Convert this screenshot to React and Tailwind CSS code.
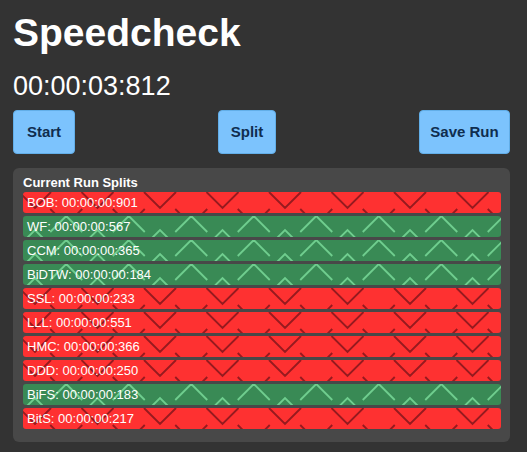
import React from "react";

const splits = [
  { name: "BOB", time: "00:00:00:901", ahead: false },
  { name: "WF", time: "00:00:00:567", ahead: true },
  { name: "CCM", time: "00:00:00:365", ahead: true },
  { name: "BiDTW", time: "00:00:00:184", ahead: true },
  { name: "SSL", time: "00:00:00:233", ahead: false },
  { name: "LLL", time: "00:00:00:551", ahead: false },
  { name: "HMC", time: "00:00:00:366", ahead: false },
  { name: "DDD", time: "00:00:00:250", ahead: false },
  { name: "BiFS", time: "00:00:00:183", ahead: true },
  { name: "BitS", time: "00:00:00:217", ahead: false },
];

const PERIOD = 62.5;
const OFFSET = 12;

// chevron background drawn behind the split text
function Chevrons({ up }) {
  const paths = [];
  for (let k = -1; k < 9; k++) {
    const a = OFFSET + k * PERIOD;
    const b = a + PERIOD / 2;
    if (up) {
      paths.push(`M${b - 16} 16 L${b} 0 L${b + 16} 16`);
      paths.push(`M${a - 16} 30 L${a} 14 L${a + 16} 30`);
    } else {
      paths.push(`M${a - 16} 0 L${a} 16 L${a + 16} 0`);
      paths.push(`M${b - 16} 17 L${b} 33 L${b + 16} 17`);
    }
  }
  return (
    <svg className="absolute inset-0 w-full h-full" aria-hidden="true">
      <path
        d={paths.join(" ")}
        fill="none"
        stroke={up ? "#6fcd8e" : "#961a1f"}
        strokeWidth="1.9"
      />
    </svg>
  );
}

const SplitRow = ({ split }) => (
  <div
    className={`relative h-[21px] rounded-[3px] overflow-hidden ${
      split.ahead ? "bg-[#398a55]" : "bg-[#fe3131]"
    }`}
  >
    <Chevrons up={split.ahead} />
    <span className="relative block pl-[4px] text-[13px] leading-[21px] text-white">
      {split.name}: {split.time}
    </span>
  </div>
);

const Button = ({ label, width }) => (
  <button
    className={`${width} h-[44px] rounded-[4px] border border-[#62aee8] bg-[#7cc3fd] text-[#0f2d4f] text-[15px] font-bold`}
  >
    {label}
  </button>
);

export default function App() {
  return (
    <div
      className="min-h-[452px] bg-[#333333] text-white"
      style={{ fontFamily: '"Liberation Sans", Arial, sans-serif' }}
    >
      <div className="ml-[13px] w-[497px] pt-[13px]">
        <h1 className="text-[39px] leading-none font-bold">Speedcheck</h1>
        <div className="mt-[21px] text-[27px] leading-none">00:00:03:812</div>

        <div className="mt-[10px] flex justify-between">
          <Button label="Start" width="w-[62px]" />
          <Button label="Split" width="w-[58px]" />
          <Button label="Save Run" width="w-[91px]" />
        </div>

        <div className="mt-[14px] rounded-md bg-[#484848] pt-[7px] pb-[13px] pl-[10px] pr-[9px]">
          <h2 className="mb-[2px] text-[13px] leading-[15px] font-bold">
            Current Run Splits
          </h2>
          <div className="flex flex-col gap-[3px]">
            {splits.map((split) => (
              <SplitRow key={split.name} split={split} />
            ))}
          </div>
        </div>
      </div>
    </div>
  );
}
